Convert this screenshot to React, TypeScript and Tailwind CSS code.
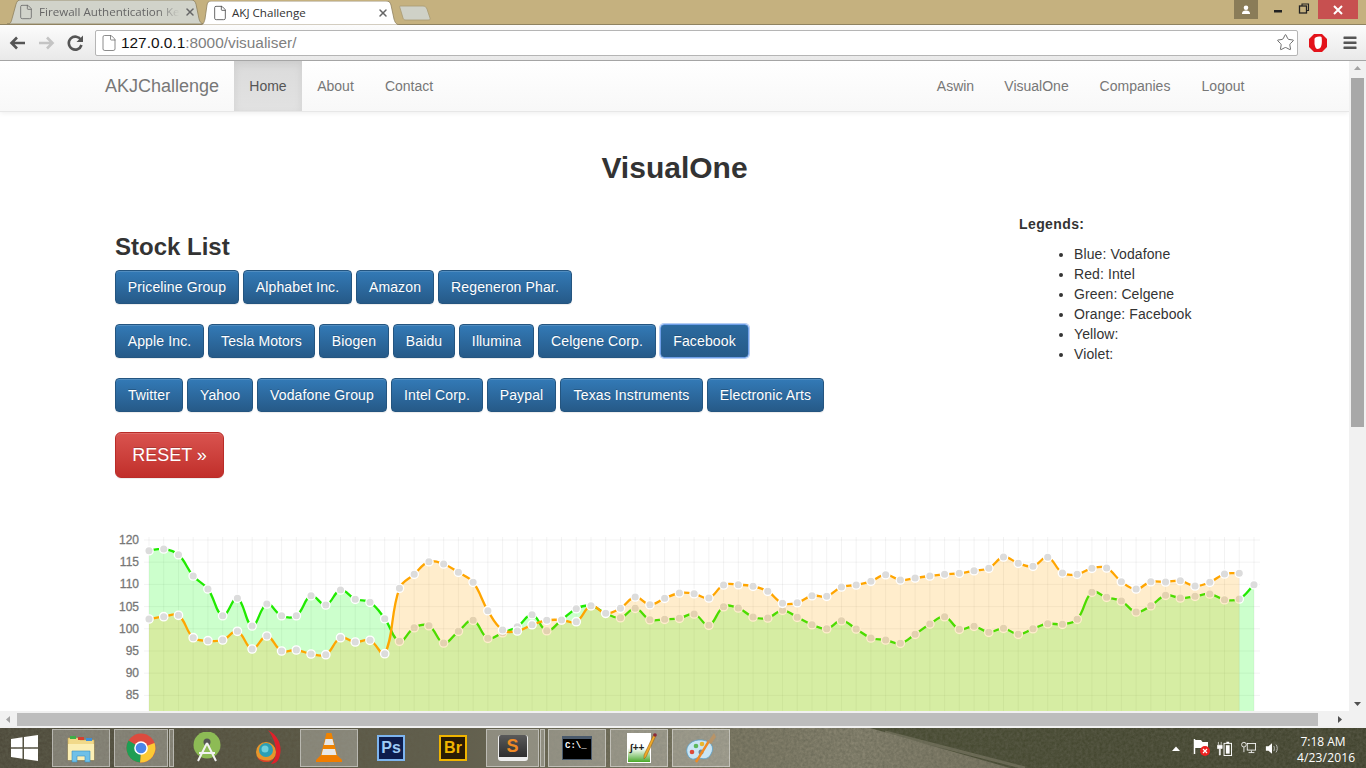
import React from "react";
import { Star, File, X } from "lucide-react";

const green = [550.7,549,554.7,576,589,615.7,598.3,626,604,615.7,615.7,595.7,605,590,599.3,602.3,618.7,641.3,627.7,625.7,643,631.3,620.3,638.3,632.7,626.7,614.7,630.7,620,608.7,605.7,613.3,617.7,608.3,619.7,619.3,618.3,614,625.3,606.7,608,617,618,610.3,617.3,624.7,628.7,620.7,629,638,640,643.3,634.3,624,616.7,629.3,626.3,632.3,628.3,634.3,628.7,623.7,624.3,619.3,592.3,597.3,601,612,605.7,595.3,598,596.3,594,599.7,599,584.7];
const orange = [619,616.7,615.3,637.7,640.7,640,631.3,649,636,651,650,654,654.7,637.7,642,640.3,653.7,588.3,574.3,561.7,564,572.3,582.3,610.7,630,631,624.7,620.3,620,621.7,605.7,613.3,608.3,597,604.7,598.3,593,593.7,598,585,584.7,586.3,591.3,603.3,602.7,595.7,596.3,587,585,581.3,574.7,580,578,576,574.3,573.3,570.7,568.3,557,563.3,566.3,557.3,573,574.3,568.3,568,581.7,589,581.7,582,580.7,586,582.3,574,573.3];

const X0 = 149;
const DX = 14.733;
const BOTTOM = 760;
const px = (i: number) => X0 + i * DX;

function spline(ys: number[]) {
  const t = 0.4;
  const pts = ys.map((y, i) => ({ x: px(i), y }));
  let d = `M${pts[0].x} ${pts[0].y}`;
  const ctrl = (i: number) => {
    const p = pts[i], a = pts[i - 1] ?? p, b = pts[i + 1] ?? p;
    const d1 = Math.hypot(p.x - a.x, p.y - a.y);
    const d2 = Math.hypot(b.x - p.x, b.y - p.y);
    const f1 = (t * d1) / (d1 + d2 || 1), f2 = (t * d2) / (d1 + d2 || 1);
    return {
      inX: p.x - f1 * (b.x - a.x), inY: p.y - f1 * (b.y - a.y),
      outX: p.x + f2 * (b.x - a.x), outY: p.y + f2 * (b.y - a.y),
    };
  };
  for (let i = 1; i < pts.length; i++) {
    const c1 = ctrl(i - 1), c2 = ctrl(i);
    d += ` C${c1.outX} ${c1.outY} ${c2.inX} ${c2.inY} ${pts[i].x} ${pts[i].y}`;
  }
  return d;
}

function Series({ ys, stroke, fill }: { ys: number[]; stroke: string; fill: string }) {
  const line = spline(ys);
  return (
    <g>
      <path d={`${line} L${px(ys.length - 1)} ${BOTTOM} L${X0} ${BOTTOM} Z`} fill={fill} />
      <path d={line} fill="none" stroke={stroke} strokeWidth={2.3} />
      {ys.map((y, i) => (
        <circle key={i} cx={px(i)} cy={y} r={4.2} fill="#dcdcdc" stroke="#fff" strokeWidth={1.3} />
      ))}
    </g>
  );
}

function Chart() {
  const ticks = [120, 115, 110, 105, 100, 95, 90, 85];
  return (
    <svg className="block mt-[52px]" width={1349} height={230} viewBox="0 530 1349 230">
      {ticks.map((v) => {
        const y = 540 + (120 - v) * 4.44;
        return (
          <g key={v}>
            <line x1={144} x2={1260} y1={y} y2={y} stroke="rgba(0,0,0,0.05)" />
            <text x={139} y={y + 4} textAnchor="end" fontSize={12} fill="#777" stroke="#777" strokeWidth={0.3} fontFamily="Liberation Sans, sans-serif">{v}</text>
          </g>
        );
      })}
      {green.map((_, i) => (
        <line key={i} x1={px(i)} x2={px(i)} y1={537} y2={BOTTOM} stroke="rgba(0,0,0,0.05)" />
      ))}
      <Series ys={green} stroke="#20ea00" fill="rgba(0,255,0,0.2)" />
      <Series ys={orange} stroke="#ffa500" fill="rgba(255,165,0,0.2)" />
    </svg>
  );
}

const BTN = "h-[34px] shrink-0 border border-[#245580] rounded-[4px] text-[14px] tracking-[0.13px] text-white bg-gradient-to-b from-[#337ab7] to-[#265a88] shadow-[inset_0_1px_0_rgba(255,255,255,0.15),0_1px_1px_rgba(0,0,0,0.075)] [text-shadow:0_-1px_0_rgba(0,0,0,0.2)] whitespace-nowrap";

function Row({ children }: { children: React.ReactNode }) {
  return <div className="flex gap-[4px] mb-[20px]">{children}</div>;
}

function Tab({ active, title, className }: { active?: boolean; title: string; className: string }) {
  return (
    <div className={`relative flex items-center h-full ${className}`}>
      <svg className="absolute inset-0 w-full h-full" viewBox={active ? "0 0 200 24" : "0 0 198 23"} preserveAspectRatio="none">
        {active ? (
          <path d="M0 24 C3 24 4 22 5 18 L7 4 C7.500 1 9 0 11 0 L186 0 C189 0 190 1 191 4 L194 18 C195 22 197 24 200 24 Z" fill="#fff" stroke="#8f8260" strokeWidth="0.8" />
        ) : (
          <path d="M0 23 C3 23 4 22 5 18 L9 4 C10 1 11 0 14 0 L184 0 C187 0 188 1 189 4 L192 18 C193 22 195 23 198 23 Z" fill="#d1d3ca" stroke="#8f8260" strokeWidth="0.8" />
        )}
      </svg>
      {active ? (
        <div className="relative flex items-center w-full pl-[12px] pr-[11px]">
          <File size={16} strokeWidth={1.2} className="shrink-0 text-[#444]" />
          <span className="ml-[4px] flex-1 whitespace-nowrap font-['Open_Sans',sans-serif] text-[11.6px] text-[#333]">{title}</span>
          <X size={12} strokeWidth={3} className="shrink-0 text-[#666]" />
        </div>
      ) : (
        <div className="relative flex items-center w-full pl-[11px] pr-[9px]">
          <File size={16} strokeWidth={1.2} className="shrink-0 text-[#666]" />
          <span className="ml-[5px] flex-1 whitespace-nowrap font-['Open_Sans',sans-serif] text-[11.6px] text-[#666] [mask-image:linear-gradient(to_right,black_82%,transparent_97%)]">{title}</span>
          <X size={12} strokeWidth={3} className="shrink-0 text-[#666]" />
        </div>
      )}
    </div>
  );
}

function TitleBar() {
  return (
    <div className="h-[25px] shrink-0 flex items-end bg-[#c5b17f] border-b border-[#8f8260]">
      <Tab title="Firewall Authentication Ke" className="w-[198px] h-[23px] ml-[7px]" />
      <Tab active title="AKJ Challenge" className="w-[200px] h-[24px] -ml-[5px] -mb-[1px]" />
      <svg width="32" height="16" className="mb-[3px] -ml-[1px]" viewBox="0 0 32 16">
        <path d="M1 1 L24 1 C26 1 27 2 28 4 L31 13 C31.500 14.500 31 15 29 15 L7 15 C5 15 4.500 14.500 4 13 L1 3 C0.700 2 0.500 1 1 1 Z" fill="#cfd1c7" stroke="#a89a72" strokeWidth="0.8" />
      </svg>
      <div className="flex-1" />
      <div className="self-start flex items-start">
        <div className="w-[24px] h-[19px] bg-[#8a7c58] flex items-center justify-center">
          <svg width="10" height="10" viewBox="0 0 10 10"><circle cx="5" cy="2.800" r="2.300" fill="#fff" /><path d="M1 9 C1 6 3 5.500 5 5.500 C7 5.500 9 6 9 9 Z" fill="#fff" /></svg>
        </div>
        <div className="w-[60px] h-[19px] relative">
          <svg width="60" height="19" viewBox="0 0 60 19">
            <rect x="16" y="10" width="8" height="2.500" fill="#222" />
            <rect x="41.500" y="6" width="7" height="7" fill="none" stroke="#222" strokeWidth="1.300" />
            <path d="M44 6 V4 H50.500 V10.500 H48.500" fill="none" stroke="#222" strokeWidth="1.100" />
          </svg>
        </div>
        <div className="w-[40px] h-[19px] bg-[#c75050] flex items-center justify-center">
          <svg width="10" height="10" viewBox="0 0 10 10"><path d="M1 1 L9 9 M9 1 L1 9" stroke="#fff" strokeWidth="2" /></svg>
        </div>
        <div className="w-[8px]" />
      </div>
    </div>
  );
}

function Toolbar() {
  return (
    <div className="h-[36px] shrink-0 flex items-center bg-gradient-to-b from-[#fcfcfc] to-[#e9e9e9] border-b border-[#a5a5a5]">
      <svg width="92" height="20" viewBox="0 0 92 20" className="ml-[3px] shrink-0">
        <path d="M22 10 H9 M14 4.500 L8.500 10 L14 15.500" fill="none" stroke="#555" strokeWidth="2.600" />
        <path d="M36 10 H49 M44 4.500 L49.500 10 L44 15.500" fill="none" stroke="#c4c4c4" strokeWidth="2.600" />
        <path d="M78 7 A6.500 6.500 0 1 0 78.500 12" fill="none" stroke="#555" strokeWidth="2.600" />
        <path d="M80 2.500 V9 H73.500 Z" fill="#555" />
      </svg>
      <div className="w-[1203px] h-[26px] shrink-0 bg-white border border-[#b5b5b5] rounded-[2px] flex items-center pl-[4px] pr-[2px]">
        <File size={18} strokeWidth={1} className="text-[#666] shrink-0" />
        <span className="ml-[3px] pt-[1px] text-[15.4px] text-[#111] whitespace-nowrap">127.0.0.1<span className="text-[#808080]">:8000/visualiser/</span></span>
        <div className="flex-1" />
        <Star size={19} strokeWidth={1.2} className="text-[#666]" />
      </div>
      <svg width="20" height="20" viewBox="0 0 20 20" className="ml-[10px] shrink-0">
        <path d="M6 1 H14 L19 6 V14 L14 19 H6 L1 14 V6 Z" fill="#e3131b" />
        <path d="M6.500 11 V6 C6.500 4 11 3 13.500 4 C14 6 14 10 13.500 12 C13 15 11 16 9.500 16 C8 16 7 14 6.500 11 Z" fill="#fff" />
      </svg>
      <svg width="14" height="14" viewBox="0 0 14 14" className="ml-[15px] shrink-0">
        <rect x="0.500" y="0.500" width="13" height="2.600" rx="0.500" fill="#555" />
        <rect x="0.500" y="5.500" width="13" height="2.600" rx="0.500" fill="#555" />
        <rect x="0.500" y="10.500" width="13" height="2.600" rx="0.500" fill="#555" />
      </svg>
    </div>
  );
}

function Navbar() {
  const link = "h-full flex items-center justify-center text-[14px] text-[#777]";
  return (
    <nav className="h-[51px] flex bg-gradient-to-b from-white to-[#f8f8f8] border-b border-[#e7e7e7] shadow-[0_1px_5px_rgba(0,0,0,0.075)] pl-[90px] pr-[89px]">
      <div className="w-[144px] h-full flex items-center pl-[15px] text-[18px] text-[#777]">AKJChallenge</div>
      <div className="w-[68px] h-full flex items-center justify-center text-[14px] text-[#555] bg-gradient-to-b from-[#dbdbdb] to-[#e2e2e2] shadow-[inset_0_3px_9px_rgba(0,0,0,0.075)]">Home</div>
      <div className={`${link} w-[67px]`}>About</div>
      <div className={`${link} w-[80px]`}>Contact</div>
      <div className="flex-1" />
      <div className={`${link} w-[67px]`}>Aswin</div>
      <div className={`${link} w-[95px]`}>VisualOne</div>
      <div className={`${link} w-[102px]`}>Companies</div>
      <div className={`${link} w-[74px]`}>Logout</div>
    </nav>
  );
}

function Page() {
  return (
    <div className="flex-1 min-w-0 overflow-hidden bg-white text-[#333]">
      <Navbar />
      <h1 className="mt-[39px] text-center text-[30px] leading-[33px] font-bold text-[#333]">VisualOne</h1>
      <div className="mt-[30px] flex pl-[115px]">
        <div className="w-[904px] shrink-0">
          <h2 className="mt-[20px] mb-[10px] text-[24px] leading-[26px] font-bold text-[#333]">Stock List</h2>
          <Row>
            <button className={`${BTN} w-[124px]`}>Priceline Group</button>
            <button className={`${BTN} w-[109px]`}>Alphabet Inc.</button>
            <button className={`${BTN} w-[78px]`}>Amazon</button>
            <button className={`${BTN} w-[134px]`}>Regeneron Phar.</button>
          </Row>
          <Row>
            <button className={`${BTN} w-[89px]`}>Apple Inc.</button>
            <button className={`${BTN} w-[107px]`}>Tesla Motors</button>
            <button className={`${BTN} w-[70px]`}>Biogen</button>
            <button className={`${BTN} w-[62px]`}>Baidu</button>
            <button className={`${BTN} w-[75px]`}>Illumina</button>
            <button className={`${BTN} w-[118px]`}>Celgene Corp.</button>
            <button className="w-[89px] h-[34px] shrink-0 border border-[#6f9fe8] rounded-[4px] text-[14px] tracking-[0.13px] text-white bg-gradient-to-b from-[#2c6a9f] to-[#265a88] shadow-[0_0_0_1px_rgba(120,165,235,0.55)] [text-shadow:0_-1px_0_rgba(0,0,0,0.2)] whitespace-nowrap">Facebook</button>
          </Row>
          <Row>
            <button className={`${BTN} w-[68px]`}>Twitter</button>
            <button className={`${BTN} w-[66px]`}>Yahoo</button>
            <button className={`${BTN} w-[130px]`}>Vodafone Group</button>
            <button className={`${BTN} w-[92px]`}>Intel Corp.</button>
            <button className={`${BTN} w-[69px]`}>Paypal</button>
            <button className={`${BTN} w-[143px]`}>Texas Instruments</button>
            <button className={`${BTN} w-[117px]`}>Electronic Arts</button>
          </Row>
          <button className="w-[109px] h-[46px] border border-[#b92c28] rounded-[6px] text-[18px] text-white bg-gradient-to-b from-[#d9534f] to-[#c12e2a] shadow-[inset_0_1px_0_rgba(255,255,255,0.15),0_1px_1px_rgba(0,0,0,0.075)] [text-shadow:0_-1px_0_rgba(0,0,0,0.2)]">RESET »</button>
        </div>
        <div className="text-[14px] leading-[20px] text-[#333]">
          <div className="font-bold tracking-[0.4px]">Legends:</div>
          <ul className="mt-[10px] pl-[55px] list-disc tracking-[0.1px]">
            <li>Blue: Vodafone</li>
            <li>Red: Intel</li>
            <li>Green: Celgene</li>
            <li>Orange: Facebook</li>
            <li>Yellow:</li>
            <li>Violet:</li>
          </ul>
        </div>
      </div>
      <Chart />
    </div>
  );
}

function VScroll() {
  return (
    <div className="w-[17px] shrink-0 bg-[#f1f1f1] flex flex-col items-center">
      <svg width="9" height="17" viewBox="0 0 9 17" className="shrink-0"><path d="M1 9 L4.500 5 L8 9 Z" fill="#a3a3a3" /></svg>
      <div className="w-[13px] h-[349px] shrink-0 bg-[#a8a8a8]" />
      <div className="flex-1" />
      <svg width="9" height="16" viewBox="0 0 9 16" className="shrink-0"><path d="M1 7 L8 7 L4.500 11 Z" fill="#505050" /></svg>
    </div>
  );
}

function HScroll() {
  return (
    <div className="h-[17px] shrink-0 bg-[#f1f1f1] flex items-center">
      <svg width="17" height="13" viewBox="0 0 17 13" className="shrink-0"><path d="M10 3 L6 6.500 L10 10 Z" fill="#a3a3a3" /></svg>
      <div className="w-[1301px] h-[13px] shrink-0 bg-[#bdbdbd]" />
      <svg width="31" height="13" viewBox="0 0 31 13" className="shrink-0"><path d="M20 3 L24 6.500 L20 10 Z" fill="#505050" /></svg>
    </div>
  );
}

const Active = "h-[38px] bg-[rgba(255,255,255,0.27)] border border-[rgba(255,255,255,0.42)] flex items-center justify-center shrink-0";
const Idle = "h-[38px] flex items-center justify-center shrink-0";

function Wallpaper() {
  return (
    <svg className="absolute inset-0" width="1366" height="40">
      <defs>
        <linearGradient id="sand" x1="0" x2="1" y1="0" y2="0">
          <stop offset="0" stopColor="#4c4839" />
          <stop offset="0.25" stopColor="#56523f" />
          <stop offset="0.45" stopColor="#625e4c" />
          <stop offset="0.7" stopColor="#7d7964" />
          <stop offset="0.85" stopColor="#8b8773" />
          <stop offset="1" stopColor="#7b7763" />
        </linearGradient>
        <linearGradient id="olive" x1="0" x2="1" y1="0" y2="0">
          <stop offset="0" stopColor="#4a4a34" />
          <stop offset="0.4" stopColor="#4b5033" />
          <stop offset="1" stopColor="#3f412c" />
        </linearGradient>
        <filter id="wall"><feTurbulence type="fractalNoise" baseFrequency="0.35" numOctaves="3" seed="4" /><feColorMatrix values="0 0 0 0 0.12  0 0 0 0 0.12  0 0 0 0 0.08  0.9 0 0 0 -0.12" /></filter>
      </defs>
      <rect width="1366" height="40" fill="url(#olive)" />
      <path d="M0 0 H870 L1010 40 H0 Z" fill="url(#sand)" />
      <path d="M885 4 L1025 40" stroke="#8b8773" strokeWidth="3" opacity="0.6" />
      <rect width="1366" height="40" filter="url(#wall)" />
    </svg>
  );
}

function Taskbar() {
  return (
    <div className="relative h-[40px] shrink-0 overflow-hidden bg-[#4b4a36]">
      <Wallpaper />
      <div className="relative h-full flex items-center">
        <div className="w-[52px] shrink-0 flex justify-center">
          <svg width="27" height="26" viewBox="0 0 27 26" className="-ml-[4px]"><path d="M0 4 L11.500 2.300 V12.300 H0 Z M13 2 L27 0 V12.300 H13 Z M0 13.700 H11.500 V23.700 L0 22 Z M13 13.700 H27 V26 L13 24 Z" fill="#fff" /></svg>
        </div>
        <div className={`${Active} w-[58px]`}>
          <svg width="32" height="32" viewBox="0 0 32 32">
            <path d="M3 6 H13 L15 8 H29 V28 H3 Z" fill="#f1d98a" stroke="#c9a94f" strokeWidth="0.600" />
            <rect x="5" y="4" width="6" height="3" fill="#3fae49" /><rect x="13" y="5" width="6" height="3" fill="#d6402f" /><rect x="21" y="6" width="6" height="3" fill="#3d8fd8" />
            <path d="M3 12 H29 V28 H3 Z" fill="#fbeeb4" />
            <path d="M7 19 H25 V30 H20 V24 H12 V30 H7 Z" fill="#6fc0e8" stroke="#3a8dc0" strokeWidth="0.600" />
          </svg>
        </div>
        <div className={`${Active} w-[54px] ml-[4px] border-[#e8e8e8]`}>
          <svg width="30" height="30" viewBox="0 0 30 30">
            <circle cx="15" cy="15" r="14.500" fill="#dd4b3e" />
            <path d="M15 15 L28.500 10 A14.500 14.500 0 0 1 14 29.500 Z" fill="#fcc934" />
            <path d="M15 15 L14 29.500 A14.500 14.500 0 0 1 2.500 7.500 Z" fill="#1e9e54" />
            <circle cx="15" cy="15" r="6.800" fill="#fff" /><circle cx="15" cy="15" r="5.300" fill="#4a86e8" />
          </svg>
        </div>
        <div className={`${Active} w-[5px] ml-[1px] border-[#e8e8e8]`} />
        <div className={`${Idle} w-[62px] ml-[2px]`}>
          <svg width="28" height="32" viewBox="0 0 28 32">
            <circle cx="14" cy="13" r="13.500" fill="#8dbb55" />
            <circle cx="14" cy="10" r="3.500" fill="#555" /><path d="M14 11 L5 29 M14 11 L23 29 M6 21 H22" fill="none" stroke="#f2f2f2" strokeWidth="2" />
          </svg>
        </div>
        <div className={`${Idle} w-[62px]`}>
          <svg width="26" height="36" viewBox="0 0 26 36" className="-ml-[2px]">
            <path d="M13 0 C24 6 27 16 25 25 C24 31 20 34 16 34 C24 26 22 12 13 0 Z" fill="#e0202a" />
            <circle cx="11" cy="22" r="10" fill="#e8952a" /><circle cx="11" cy="20" r="7" fill="#2b9fb5" />
            <circle cx="10" cy="19" r="3.500" fill="#6fd0dc" />
            <path d="M2 27 C6 31 15 32 19 28 C17 33 5 34 2 27 Z" fill="#d5402b" />
          </svg>
        </div>
        <div className={`${Active} w-[58px]`}>
          <svg width="28" height="32" viewBox="0 0 28 32">
            <path d="M11.500 1 H16.500 L23 26 H5 Z" fill="#f08300" />
            <path d="M10.500 7 H17.500 L19 13 H9 Z M8 17 H20 L21.500 23 H6.500 Z" fill="#e8e8e8" />
            <path d="M5 24 L1 28 V30 H27 V28 L23 24 Z" fill="#f07d00" />
          </svg>
        </div>
        <div className={`${Idle} w-[62px] ml-[2px]`}>
          <div className="w-[28px] h-[26px] bg-[#0d1c4d] border-[2px] border-[#7db4ef] flex items-center justify-center text-[#9fcbf5] text-[16px] font-bold leading-none">Ps</div>
        </div>
        <div className={`${Idle} w-[62px]`}>
          <div className="w-[28px] h-[26px] bg-[#2b1c05] border-[2px] border-[#f0b400] flex items-center justify-center text-[#f0b400] text-[16px] font-bold leading-none">Br</div>
        </div>
        <div className={`${Active} w-[53px] ml-[2px]`}>
          <div className="w-[30px] h-[26px] bg-gradient-to-b from-[#5a5a5a] to-[#2f2f2f] border-b-[4px] border-x-[1px] border-[#eeeeee] rounded-[3px] flex items-center justify-center text-[#f08a24] text-[18px] font-bold leading-none">S</div>
        </div>
        <div className={`${Active} w-[5px] ml-[1px]`} />
        <div className={`${Active} w-[58px] ml-[3px]`}>
          <div className="w-[30px] h-[24px] bg-black border-t-[3px] border-[#4a5a6c] border-x border-b flex items-start pl-[2px] font-['Liberation_Mono',monospace] text-white text-[9px] leading-[14px] font-bold whitespace-nowrap">C:\_</div>
        </div>
        <div className={`${Active} w-[58px] ml-[4px]`}>
          <div className="relative w-[24px] h-[30px] bg-gradient-to-b from-white via-white to-[#46a81e] border border-white text-[#222] text-[10px] leading-[28px] font-bold pl-[2px] whitespace-nowrap">
            ∫++
            <svg className="absolute -right-[7px] -top-[1px]" width="14" height="28" viewBox="0 0 14 28"><path d="M11 1 L13 2.500 L3 24 L1 26 L1 22 Z" fill="#f0a92a" stroke="#8a5a10" strokeWidth="0.500" /><circle cx="12" cy="2" r="1.800" fill="#8a2a3a" /></svg>
          </div>
        </div>
        <div className={`${Active} w-[58px] ml-[4px]`}>
          <svg width="32" height="32" viewBox="0 0 32 32">
            <path d="M2 21 C0 13 8 7 17 8 C26 9 30 15 26 22 C23 28 18 27 14 26 C11 25 10 28 7 27 C4 26 3 24 2 21 Z" fill="#c9e5f4" stroke="#5ba2cc" strokeWidth="0.800" />
            <circle cx="7" cy="20" r="2.300" fill="#dc4a3a" /><circle cx="11" cy="14" r="2.300" fill="#5cb85c" /><circle cx="17" cy="12" r="2.300" fill="#e8b62f" /><circle cx="16" cy="20" r="2.500" fill="#6d8899" />
            <path d="M11 30 L24 9" stroke="#f08a24" strokeWidth="2.400" /><path d="M23 10 L29 1 L31 5 L26 12 Z" fill="#b89468" />
          </svg>
        </div>
        <div className="flex-1" />
        <svg width="8" height="5" viewBox="0 0 8 5" className="shrink-0"><path d="M0 5 L4 0.500 L8 5 Z" fill="#fff" /></svg>
        <svg width="18" height="18" viewBox="0 0 18 18" className="ml-[13px] shrink-0">
          <path d="M1.500 0 V15" stroke="#fff" strokeWidth="1.500" /><path d="M2 1 H8 L9.500 3 H15 V9 H2 Z" fill="#fff" />
          <circle cx="12" cy="12" r="5" fill="#e22" /><path d="M10 10 L14 14 M14 10 L10 14" stroke="#fff" strokeWidth="1.200" />
        </svg>
        <svg width="15" height="15" viewBox="0 0 16 16" className="ml-[6px] shrink-0">
          <path d="M1.500 1 V4 M4.500 1 V4 M0.500 4.500 H5.500 V8 H3.500 V15 H2.500 V8 H0.500 Z" fill="#fff" stroke="#fff" strokeWidth="0.700" />
          <rect x="7.500" y="2.500" width="8" height="13" fill="none" stroke="#fff" /><rect x="9.500" y="4.500" width="4" height="9" fill="#fff" /><rect x="10" y="0.800" width="3" height="1.700" fill="#fff" />
        </svg>
        <svg width="15" height="14" viewBox="0 0 18 16" className="ml-[9px] shrink-0">
          <circle cx="3.500" cy="4" r="2.800" fill="none" stroke="#fff" /><path d="M3.500 7 V13" stroke="#fff" />
          <rect x="7.500" y="2.500" width="10" height="8" fill="none" stroke="#fff" /><path d="M9 13.500 H16 M12.500 11 V13.500" stroke="#fff" />
        </svg>
        <svg width="14" height="13" viewBox="0 0 16 14" className="ml-[9px] shrink-0">
          <path d="M1 4.500 H4 L8 1 V13 L4 9.500 H1 Z" fill="#fff" />
          <path d="M10 4 C11 6 11 8 10 10 M12.500 2.500 C14.500 5 14.500 9 12.500 11.500" fill="none" stroke="#c9c9c9" />
        </svg>
        <div className="ml-[18px] mr-[17px] pt-[3px] w-[52px] text-center shrink-0 font-['Open_Sans',sans-serif] text-[12px] leading-[16px] text-white whitespace-nowrap">
          <div>7:18 AM</div>
          <div className="tracking-[0.15px]">4/23/2016</div>
        </div>
      </div>
    </div>
  );
}

export default function App() {
  return (
    <div className="w-[1366px] h-[768px] overflow-hidden flex flex-col bg-white font-['Liberation_Sans',Arial,sans-serif]">
      <TitleBar />
      <Toolbar />
      <div className="h-[650px] shrink-0 flex">
        <Page />
        <VScroll />
      </div>
      <HScroll />
      <Taskbar />
    </div>
  );
}
